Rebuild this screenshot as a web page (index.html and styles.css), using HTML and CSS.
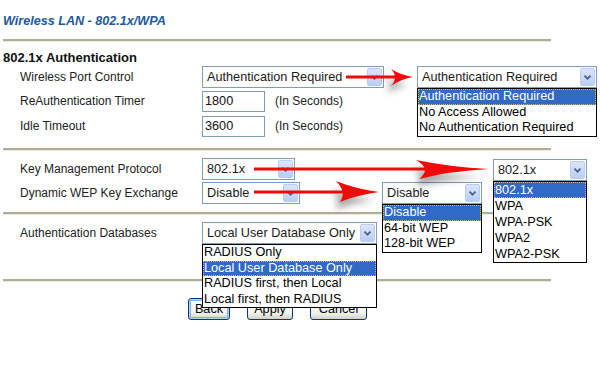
FILE: index.html
```html
<!DOCTYPE html>
<html lang="en">
<head>
    <meta charset="UTF-8">
    <title>Wireless LAN - 802.1x/WPA</title>
    <link rel="stylesheet" href="styles.css">
</head>
<body>
    <div class="page">
        <h1 class="title">Wireless LAN - 802.1x/WPA</h1>
        <div class="rule"></div>

        <h2 class="section">802.1x Authentication</h2>
        <div class="row first">
            <span class="label">Wireless Port Control</span>
            <div class="select port"><span class="val">Authentication Required</span><span class="btn"><svg viewBox="0 0 15 17"><path d="M4 7 L7.5 10.5 L11 7"/></svg></span></div>
            <div class="select port-open">
                <span class="val">Authentication Required</span><span class="btn"><svg viewBox="0 0 15 17"><path d="M4 7 L7.5 10.5 L11 7"/></svg></span>
                <ul class="list">
                    <li class="sel">Authentication Required</li>
                    <li>No Access Allowed</li>
                    <li>No Authentication Required</li>
                </ul>
            </div>
        </div>
        <div class="row">
            <span class="label">ReAuthentication Timer</span>
            <input class="field" type="text" value="1800">
            <span class="unit">(In Seconds)</span>
        </div>
        <div class="row third">
            <span class="label">Idle Timeout</span>
            <input class="field" type="text" value="3600">
            <span class="unit">(In Seconds)</span>
        </div>

        <div class="rule mid"></div>

        <div class="row key">
            <span class="label">Key Management Protocol</span>
            <div class="select keymgmt"><span class="val">802.1x</span><span class="btn"><svg viewBox="0 0 15 17"><path d="M4 7 L7.5 10.5 L11 7"/></svg></span></div>
            <div class="select keymgmt-open">
                <span class="val">802.1x</span><span class="btn"><svg viewBox="0 0 15 17"><path d="M4 7 L7.5 10.5 L11 7"/></svg></span>
                <ul class="list tall">
                    <li class="sel">802.1x</li>
                    <li>WPA</li>
                    <li>WPA-PSK</li>
                    <li>WPA2</li>
                    <li>WPA2-PSK</li>
                </ul>
            </div>
        </div>
        <div class="row">
            <span class="label">Dynamic WEP Key Exchange</span>
            <div class="select wep"><span class="val">Disable</span><span class="btn"><svg viewBox="0 0 15 17"><path d="M4 7 L7.5 10.5 L11 7"/></svg></span></div>
            <div class="select wep-open">
                <span class="val">Disable</span><span class="btn"><svg viewBox="0 0 15 17"><path d="M4 7 L7.5 10.5 L11 7"/></svg></span>
                <ul class="list">
                    <li class="sel">Disable</li>
                    <li>64-bit WEP</li>
                    <li>128-bit WEP</li>
                </ul>
            </div>
        </div>

        <div class="rule low"></div>

        <div class="row db">
            <span class="label">Authentication Databases</span>
            <div class="select authdb">
                <span class="val">Local User Database Only</span><span class="btn"><svg viewBox="0 0 15 17"><path d="M4 7 L7.5 10.5 L11 7"/></svg></span>
                <ul class="list">
                    <li>RADIUS Only</li>
                    <li class="sel">Local User Database Only</li>
                    <li>RADIUS first, then Local</li>
                    <li>Local first, then RADIUS</li>
                </ul>
            </div>
        </div>

        <div class="rule end"></div>

        <div class="buttons">
            <button class="xp default">Back</button>
            <button class="xp">Apply</button>
            <button class="xp">Cancel</button>
        </div>
    </div>

    <!-- red callout arrows drawn over the form -->
    <svg class="arrows" width="600" height="368" viewBox="0 0 600 368">
        <defs>
            <filter id="soft" x="-20%" y="-50%" width="140%" height="200%">
                <feGaussianBlur stdDeviation="3.5"/>
            </filter>
        </defs>
        <g class="shadow" filter="url(#soft)" transform="translate(-5 8)">
            <path d="M391,69 Q401,75 413,77 Q401,79 391,86 Q399,77 391,69 Z"/>
            <path d="M416,160 Q450,167 489,169 Q450,171 419,179 Q432,169 416,160 Z"/>
            <path d="M336,181 Q356,189 379,192 Q357,195 340,202 Q347,192 336,181 Z"/>
        </g>
        <g class="shaft">
            <line x1="346" y1="77" x2="399" y2="77"/>
            <line x1="254" y1="169" x2="428" y2="169"/>
            <line x1="254" y1="192" x2="346" y2="192"/>
        </g>
        <g class="head">
            <path d="M391,69 Q401,75 413,77 Q401,79 391,86 Q399,77 391,69 Z"/>
            <path d="M416,160 Q450,167 489,169 Q450,171 419,179 Q432,169 416,160 Z"/>
            <path d="M336,181 Q356,189 379,192 Q357,195 340,202 Q347,192 336,181 Z"/>
        </g>
    </svg>
</body>
</html>
```

FILE: styles.css
```css
* {
    margin: 0;
    padding: 0;
    box-sizing: border-box;
}

body {
    font-family: "Liberation Sans", Arial, Helvetica, sans-serif;
    background-color: #fff;
    color: #1a1a1a;
    position: relative;
    width: 600px;
    height: 368px;
    overflow: hidden;
}

.page {
    padding-left: 3px;
}

.title {
    padding-top: 13px;
    font-size: 12.6px;
    line-height: 17px;
    font-weight: bold;
    font-style: italic;
    color: #22589e;
}

.rule {
    width: 548px;
    height: 3px;
    margin-top: 9px;
    border-top: 2px solid #aeac9c;
    border-bottom: 1px solid #efecdc;
}

.rule.mid {
    margin-top: 10px;
}

.rule.low {
    margin-top: 7px;
}

.rule.end {
    margin-top: 34px;
}

.section {
    margin-top: 8px;
    font-size: 13px;
    line-height: 16px;
    font-weight: bold;
    color: #111;
}

.row {
    display: flex;
    align-items: center;
    height: 24px;
}

.row.first {
    margin-top: -1px;
}

.row.third {
    margin-top: 1px;
}

.row.key,
.row.db {
    margin-top: 6px;
}

.label {
    width: 182px;
    margin-left: 17px;
    font-size: 12px;
    color: #222;
}

/* xp style combo boxes */
.select {
    position: relative;
    height: 22px;
    border: 1px solid #7f9db9;
    background-color: #fff;
    font-size: 12.7px;
    line-height: 20px;
}

.select .val {
    display: block;
    padding-left: 4px;
    white-space: nowrap;
}

.select .btn {
    position: absolute;
    top: 1px;
    right: 1px;
    width: 15px;
    height: 18px;
    border: 1px solid #bccbf0;
    border-radius: 2px;
    background: linear-gradient(#dbe6fd, #b9cdf7);
}

.select .btn svg {
    display: block;
    width: 13px;
    height: 16px;
}

.select .btn path {
    fill: none;
    stroke: #4d6185;
    stroke-width: 2;
}

.port {
    width: 182px;
}

.port-open {
    width: 180px;
    margin-left: 33px;
}

.keymgmt {
    width: 93px;
}

.keymgmt-open {
    width: 94px;
    margin-left: 198px;
    align-self: flex-end;
}

.wep {
    width: 98px;
}

.wep-open {
    width: 100px;
    margin-left: 82px;
}

.authdb {
    width: 175px;
}

.list {
    position: absolute;
    top: 21px;
    left: -1px;
    right: -1px;
    z-index: 10;
    list-style: none;
    border: 1px solid #000;
    background-color: #fff;
}

.list li {
    height: 15.5px;
    line-height: 15.5px;
    padding-left: 1px;
    white-space: nowrap;
    color: #000;
}

.list.tall li {
    height: 16px;
    line-height: 16px;
}

.list li.sel {
    background-color: #316ac5;
    color: #fff;
    outline: 1px dotted #d8b860;
    outline-offset: -1px;
}

.field {
    width: 63px;
    height: 21px;
    border: 1px solid #7f9db9;
    padding-left: 2px;
    font-family: "Liberation Sans", Arial, sans-serif;
    font-size: 12.7px;
    color: #111;
}

.unit {
    margin-left: 10px;
    font-size: 12px;
    color: #222;
}

.buttons {
    display: flex;
    gap: 17px;
    margin-top: 16px;
    padding-left: 185px;
}

.xp {
    height: 22px;
    padding: 0 4px;
    border: 1px solid #003c74;
    border-radius: 3px;
    background: linear-gradient(#ffffff, #f3f2ec 70%, #d6d0c5);
    font-family: "Liberation Sans", Arial, sans-serif;
    font-size: 12.7px;
    color: #000;
}

.xp:nth-child(1) {
    width: 42px;
}

.xp:nth-child(2) {
    width: 46px;
}

.xp:nth-child(3) {
    width: 57px;
}

.xp.default {
    box-shadow: inset 0 0 0 1px #b9d1f8, inset 0 0 0 2px #89adf0;
}

.arrows {
    position: absolute;
    top: 0;
    left: 0;
    pointer-events: none;
    z-index: 20;
}

.shadow path {
    fill: #000;
    opacity: 0.35;
}

.shaft line {
    stroke: #f00a0a;
    stroke-width: 2.8;
}

.head path {
    fill: #f00a0a;
}
```
